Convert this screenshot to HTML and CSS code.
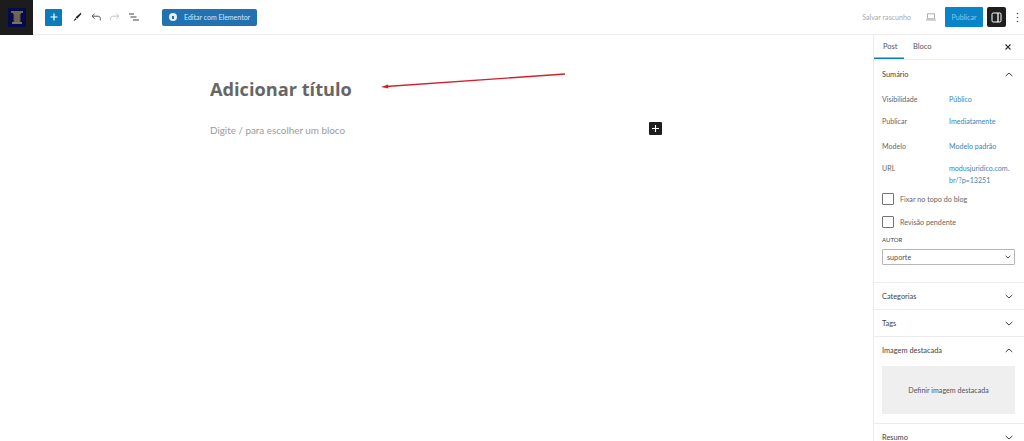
FILE: index.html
```html
<!DOCTYPE html>
<html lang="pt-BR">
<head>
    <meta charset="UTF-8">
    <meta name="viewport" content="width=device-width, initial-scale=1.0">
    <title>Adicionar novo post</title>
    <link rel="stylesheet" href="styles.css">
</head>
<body>
    <header class="topbar">
        <div class="site-logo">
            <svg width="18" height="19" viewBox="0 0 18 19"><rect width="18" height="19" fill="#060a4a"/><path d="M3 3h12v2h-2v1H5V5H3z" fill="#6f6856"/><path d="M5.5 6h7v8h-7z" fill="#5f5646"/><path d="M7.2 6v8M9 6v8M10.8 6v8" stroke="#7d745f" stroke-width="0.8"/><path d="M4 14h10v2H4z" fill="#7a7262"/></svg>
        </div>
        <div class="tools">
            <button class="add-btn">
                <svg width="8" height="8" viewBox="0 0 8 8"><path d="M4 0.5v7M0.5 4h7" stroke="#fff" stroke-width="1.2"/></svg>
            </button>
            <svg class="tool-icon" width="10" height="10" viewBox="0 0 10 10"><path d="M8.8 0.8 L3.6 5.2 L5.2 6.8 L9.4 2z" fill="#222"/><path d="M3.2 6 L1.6 9 L4.6 7.6z" fill="#222"/></svg>
            <svg class="tool-icon" width="10" height="8" viewBox="0 0 10 8"><path d="M3.6 0.8 L1 3.2 L3.6 5.6M1 3.2H7c1.4 0 2.3 0.9 2.3 2.2V7.4" fill="none" stroke="#555" stroke-width="1"/></svg>
            <svg class="tool-icon" width="10" height="8" viewBox="0 0 10 8"><path d="M6.4 0.8 L9 3.2 L6.4 5.6M9 3.2H3C1.6 3.2 0.7 4.1 0.7 5.4V7.4" fill="none" stroke="#c6c6c6" stroke-width="1"/></svg>
            <svg class="tool-icon list-icon" width="10" height="8" viewBox="0 0 10 8"><path d="M0 1h5M1.5 4h6M4 7h6" stroke="#444" stroke-width="1"/></svg>
            <button class="elementor-btn">
                <span class="elementor-logo"><span class="elementor-mark"></span></span>
                Editar com Elementor
            </button>
        </div>
        <div class="actions">
            <span class="save-draft">Salvar rascunho</span>
            <svg class="preview-icon" width="10" height="8" viewBox="0 0 10 8"><path d="M1.5 0.8h7v5h-7zM0 7h10" fill="none" stroke="#999" stroke-width="0.8"/></svg>
            <button class="publish-btn">Publicar</button>
            <button class="panel-btn">
                <svg width="11" height="11" viewBox="0 0 11 11"><rect x="1" y="1" width="9" height="9" rx="1.2" fill="none" stroke="#fff" stroke-width="1"/><path d="M7 1v9" stroke="#fff" stroke-width="1.3"/></svg>
            </button>
            <svg class="more-icon" width="3" height="11" viewBox="0 0 3 11"><circle cx="1.5" cy="1.5" r="0.8" fill="#555"/><circle cx="1.5" cy="5.5" r="0.8" fill="#555"/><circle cx="1.5" cy="9.5" r="0.8" fill="#555"/></svg>
        </div>
    </header>

    <div class="workspace">
        <main class="editor">
            <div class="editor-column">
                <h1 class="post-title">Adicionar título</h1>
                <div class="block-line">
                    <p class="placeholder">Digite / para escolher um bloco</p>
                    <button class="inline-add">
                        <svg width="7" height="7" viewBox="0 0 7 7"><path d="M3.5 0v7M0 3.5h7" stroke="#fff" stroke-width="1.1"/></svg>
                    </button>
                </div>
            </div>
            <svg class="arrow" width="190" height="20" viewBox="0 0 190 20"><path d="M187 2 L8 14.5" stroke="#d3202a" stroke-width="1.3"/><path d="M3 15 L10 12.4 L10.4 16.4z" fill="#d3202a"/></svg>
        </main>

        <aside class="sidebar">
            <div class="tabs">
                <span class="tab active">Post</span>
                <span class="tab">Bloco</span>
                <svg class="close-icon" width="6" height="6" viewBox="0 0 6 6"><path d="M0.5 0.5l5 5M5.5 0.5l-5 5" stroke="#333" stroke-width="1.1"/></svg>
            </div>

            <section class="panel summary">
                <div class="panel-title">Sumário
                    <svg class="chevron" width="8" height="5" viewBox="0 0 8 5"><path d="M0.7 4l3.3-3L7.3 4" fill="none" stroke="#444" stroke-width="1"/></svg>
                </div>
                <div class="row row-visibility"><span class="label">Visibilidade</span><span class="value">Público</span></div>
                <div class="row row-publish"><span class="label">Publicar</span><span class="value">Imediatamente</span></div>
                <div class="row row-template"><span class="label">Modelo</span><span class="value">Modelo padrão</span></div>
                <div class="row row-url"><span class="label">URL</span><span class="value">modusjuridico.com.<br>br/?p=13251</span></div>
                <label class="check check-sticky"><span class="box"></span>Fixar no topo do blog</label>
                <label class="check check-pending"><span class="box"></span>Revisão pendente</label>
                <div class="author-label">AUTOR</div>
                <div class="author-select">suporte
                    <svg width="6" height="4" viewBox="0 0 6 4"><path d="M0.6 0.8l2.4 2.2 2.4-2.2" fill="none" stroke="#444" stroke-width="0.9"/></svg>
                </div>
            </section>

            <section class="panel closed">
                <div class="panel-title">Categorias
                    <svg class="chevron" width="8" height="5" viewBox="0 0 8 5"><path d="M0.7 1l3.3 3 3.3-3" fill="none" stroke="#444" stroke-width="1"/></svg>
                </div>
            </section>
            <section class="panel closed">
                <div class="panel-title">Tags
                    <svg class="chevron" width="8" height="5" viewBox="0 0 8 5"><path d="M0.7 1l3.3 3 3.3-3" fill="none" stroke="#444" stroke-width="1"/></svg>
                </div>
            </section>
            <section class="panel featured">
                <div class="panel-title">Imagem destacada
                    <svg class="chevron" width="8" height="5" viewBox="0 0 8 5"><path d="M0.7 4l3.3-3L7.3 4" fill="none" stroke="#444" stroke-width="1"/></svg>
                </div>
                <div class="featured-box">Definir imagem destacada</div>
            </section>
            <section class="panel closed">
                <div class="panel-title">Resumo
                    <svg class="chevron" width="8" height="5" viewBox="0 0 8 5"><path d="M0.7 1l3.3 3 3.3-3" fill="none" stroke="#444" stroke-width="1"/></svg>
                </div>
            </section>
        </aside>
    </div>
</body>
</html>
```
FILE: styles.css
```css
html, body {
    height: 100%;
}

body {
    font-family: Lato, "Open Sans", sans-serif;
    background: #fff;
    color: #555;
    margin: 0;
    overflow: hidden;
    display: flex;
    flex-direction: column;
    font-size: 8px;
}

button {
    border: none;
    padding: 0;
    font-family: inherit;
    cursor: pointer;
}

.topbar {
    height: 35px;
    flex-shrink: 0;
    display: flex;
    align-items: center;
    border-bottom: 1px solid #ececec;
    box-sizing: border-box;
}

.site-logo {
    width: 33px;
    height: 35px;
    background: #1c1c1c;
    display: flex;
    align-items: center;
    justify-content: center;
}

.tools {
    display: flex;
    align-items: center;
    margin-left: 12px;
}

.add-btn {
    width: 17px;
    height: 17px;
    background: #0a7cba;
    border-radius: 1px;
    display: flex;
    align-items: center;
    justify-content: center;
    margin-right: 10px;
}

.tool-icon {
    margin-right: 9px;
}

.list-icon {
    margin-right: 0;
}

.elementor-btn {
    height: 17px;
    width: 95px;
    margin-left: 23px;
    background: #2271b1;
    border-radius: 2px;
    color: #d8e8f4;
    font-size: 7px;
    white-space: nowrap;
    display: flex;
    align-items: center;
    gap: 7px;
    padding-left: 7px;
    box-sizing: border-box;
}

.elementor-logo {
    width: 8px;
    height: 8px;
    border-radius: 50%;
    background: #e8eff6;
    display: flex;
    align-items: center;
    justify-content: center;
}

.elementor-mark {
    width: 2px;
    height: 3px;
    background: #2271b1;
}

.actions {
    margin-left: auto;
    display: flex;
    align-items: center;
}

.save-draft {
    color: #a9a9a9;
    font-size: 7.1px;
    margin-right: 15px;
}

.preview-icon {
    margin-right: 9px;
}

.publish-btn {
    width: 38px;
    height: 20px;
    background: #0a84c8;
    color: #8cc4e4;
    font-size: 7.1px;
    border-radius: 1px;
    margin-right: 4px;
}

.panel-btn {
    width: 19px;
    height: 20px;
    background: #1e1e1e;
    border-radius: 2px;
    display: flex;
    align-items: center;
    justify-content: center;
    margin-right: 10px;
}

.more-icon {
    margin-right: 5px;
}

.workspace {
    flex: 1;
    display: flex;
    min-height: 0;
}

.editor {
    flex: 1;
    position: relative;
}

.editor-column {
    width: 452px;
    margin-left: 210px;
}

.post-title {
    margin: 0;
    padding-top: 41px;
    font-family: "Open Sans", sans-serif;
    font-size: 18.2px;
    line-height: 26px;
    font-weight: 700;
    color: #666;
}

.block-line {
    display: flex;
    align-items: center;
    justify-content: space-between;
    margin-top: 21px;
}

.placeholder {
    margin: 0;
    font-size: 9.85px;
    line-height: 14px;
    color: #9b9b9b;
}

.inline-add {
    width: 13px;
    height: 13px;
    background: #1e1e1e;
    border-radius: 1px;
    display: flex;
    align-items: center;
    justify-content: center;
    margin-top: -3px;
}

.arrow {
    position: absolute;
    left: 378px;
    top: 37px;
}

.sidebar {
    width: 150px;
    flex-shrink: 0;
    border-left: 1px solid #ececec;
    overflow: hidden;
}

.tabs {
    height: 25px;
    display: flex;
    align-items: stretch;
    border-bottom: 1px solid #ececec;
    box-sizing: border-box;
    padding-right: 13px;
}

.tab {
    color: #555;
    font-size: 7.5px;
    line-height: 24px;
    padding: 0 9px;
}

.tab.active {
    width: 30px;
    box-sizing: border-box;
    box-shadow: inset 0 -1.5px 0 #0a7cba;
}

.close-icon {
    margin-left: auto;
    align-self: center;
}

.panel {
    border-bottom: 1px solid #ececec;
    padding: 0 8px;
}

.panel-title {
    height: 26px;
    display: flex;
    align-items: center;
    justify-content: space-between;
    font-size: 7.4px;
    color: #444;
    padding-right: 3px;
}

.summary {
    height: 223px;
    box-sizing: border-box;
    padding-top: 1px;
}

.row {
    display: flex;
    line-height: 12px;
    font-size: 7.1px;
}

.label {
    width: 67px;
    flex-shrink: 0;
    color: #666;
}

.value {
    color: #3a85b8;
}

.row-visibility {
    margin-top: 7px;
}

.row-publish {
    margin-top: 10px;
}

.row-template {
    margin-top: 13px;
}

.row-url {
    margin-top: 10px;
}

.check {
    display: flex;
    align-items: center;
    gap: 6px;
    font-size: 7.2px;
    color: #666;
}

.check-sticky {
    margin-top: 6px;
}

.check-pending {
    margin-top: 11px;
}

.box {
    width: 10px;
    height: 10px;
    border: 1px solid #757575;
    border-radius: 1px;
    background: #fff;
}

.author-label {
    font-size: 6px;
    line-height: 8px;
    color: #444;
    margin-top: 8px;
}

.author-select {
    height: 16px;
    width: 133px;
    box-sizing: border-box;
    margin-top: 5px;
    border: 1px solid #b5b5b5;
    border-radius: 1px;
    display: flex;
    align-items: center;
    justify-content: space-between;
    padding: 0 3px 0 4px;
    font-size: 7.2px;
    color: #555;
}

.featured {
    height: 87px;
    box-sizing: border-box;
}

.featured-box {
    height: 48px;
    width: 133px;
    margin-top: 3px;
    background: #efefef;
    display: flex;
    align-items: center;
    justify-content: center;
    font-size: 7.1px;
    color: #555;
}
```
